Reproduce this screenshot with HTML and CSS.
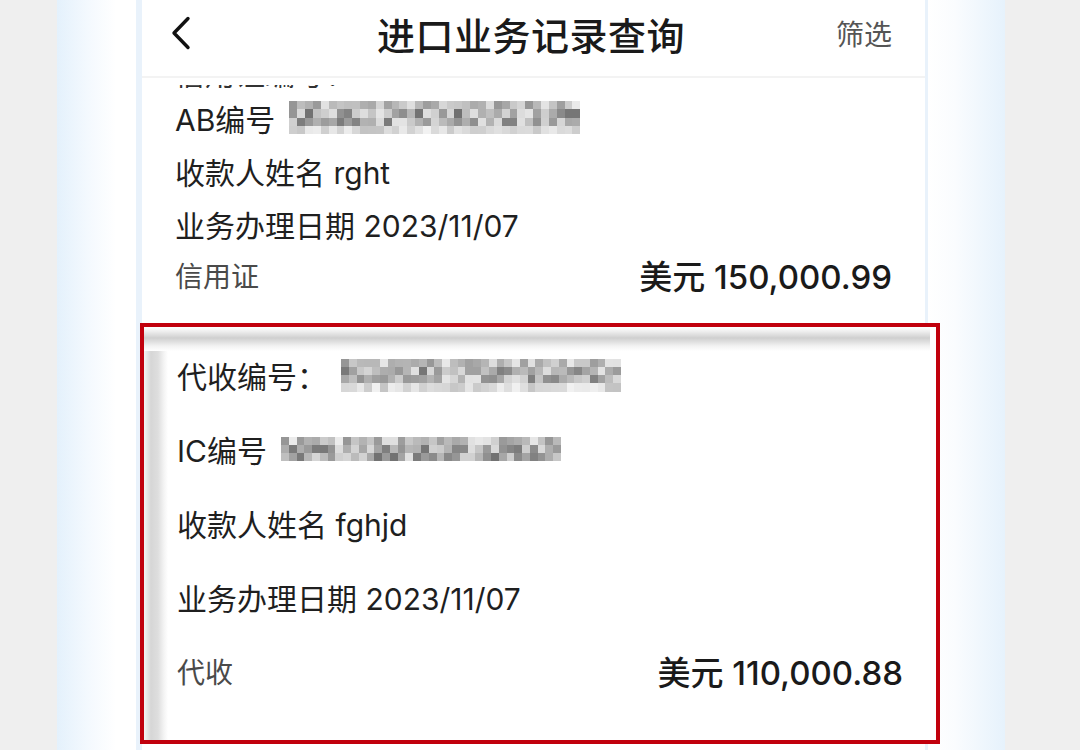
FILE: index.html
```html
<!DOCTYPE html>
<html lang="zh-CN">
<head>
<meta charset="utf-8">
<title>进口业务记录查询</title>
<link rel="stylesheet" href="styles.css">
</head>
<body>
<div class="page">
  <div class="gray gray-l"></div>
  <div class="grad-l"></div>
  <div class="strip strip-l"></div>
  <main class="phone">
    <header class="nav">
      <div class="nav-left">
        <svg class="back" width="22" height="34" viewBox="0 0 22 34"><polyline points="18,2.5 4,17 18,31.5" fill="none" stroke="#111" stroke-width="3.4" stroke-linecap="round" stroke-linejoin="round"/></svg>
      </div>
      <h1 class="title">进口业务记录查询</h1>
      <div class="nav-right"><span class="filter">筛选</span></div>
    </header>
    <section class="list">
      <div class="cut"><span class="cut-text">信用证编号：LC2023110700012</span></div>
      <article class="card1">
        <div class="row"><span>AB编号</span><span class="mosaic ab" data-cols="37" data-rows="4" data-seed="11"></span></div>
        <div class="row">收款人姓名 rght</div>
        <div class="row">业务办理日期 2023/11/07</div>
        <div class="row foot"><span class="type">信用证</span><span class="amount">美元 150,000.99</span></div>
      </article>
      <div class="highlight">
        <article class="card2">
          <div class="row"><span>代收编号：</span><span class="mosaic dc" data-cols="36" data-rows="4" data-seed="27"></span></div>
          <div class="row"><span>IC编号</span><span class="mosaic ic" data-cols="36" data-rows="3" data-seed="53"></span></div>
          <div class="row">收款人姓名 fghjd</div>
          <div class="row">业务办理日期 2023/11/07</div>
          <div class="row foot"><span class="type">代收</span><span class="amount">美元 110,000.88</span></div>
        </article>
      </div>
    </section>
  </main>
  <div class="strip strip-r"></div>
  <div class="grad-r"></div>
  <div class="gray gray-r"></div>
</div>
<script src="script.js"></script>
</body>
</html>
```

FILE: styles.css
```css
html, body {
  margin: 0;
  padding: 0;
}
body {
  width: 1080px;
  height: 750px;
  overflow: hidden;
  font-family: Inter, "Noto Sans CJK SC", sans-serif;
  color: #1f1f1f;
  background: #fff;
}
.page {
  display: flex;
  height: 750px;
}
.gray {
  background: #efefef;
  flex: none;
}
.gray-l { width: 57px; }
.gray-r { width: 75px; }
.grad-l {
  width: 79px;
  flex: none;
  background: linear-gradient(to right, #e4f1fc 0%, #f4f9fe 40%, #ffffff 75%, #ffffff 100%);
}
.grad-r {
  width: 77px;
  flex: none;
  background: linear-gradient(to right, #ffffff 0%, #fafcfe 35%, #e6f2fc 100%);
}
.strip {
  flex: none;
  background: #e9f2fb;
}
.strip-l { width: 6px; }
.strip-r { width: 3px; }

.phone {
  width: 783px;
  flex: none;
  background: #fff;
  display: flex;
  flex-direction: column;
}

/* nav */
.nav {
  box-sizing: border-box;
  height: 78px;
  border-bottom: 2px solid #f3f3f3;
  display: grid;
  grid-template-columns: 1fr auto 1fr;
  align-items: center;
  padding: 0 33px 10px 28px;
}
.nav-left {
  display: flex;
  align-items: center;
}
.back { display: block; }
.title {
  margin: 0;
  font-size: 38px;
  font-weight: 500;
  color: #1a1a1a;
  letter-spacing: 0.5px;
}
.nav-right {
  display: flex;
  justify-content: flex-end;
}
.filter {
  font-size: 28px;
  color: #555;
}

/* list */
.list {
  display: flex;
  flex-direction: column;
}
/* previous row scrolled under the nav: only its very bottom edge shows */
.cut {
  flex: none;
  margin-top: 7px;
  height: 3px;
  min-height: 0;
  overflow: hidden;
  padding-left: 33px;
  color: #333;
}
.cut-text {
  display: block;
  font-size: 30px;
  line-height: 30px;
  height: 30px;
  white-space: nowrap;
  margin-top: -26px;
}
.row {
  display: flex;
  align-items: center;
  font-size: 30px;
  white-space: nowrap;
}
.card1 {
  padding: 3px 33px 0 33px;
}
.card1 .row {
  height: 53px;
}
.card1 .row.foot {
  height: 49px;
}
.foot {
  justify-content: space-between;
}
.type {
  font-size: 28px;
  color: #4a4a4a;
}
.amount {
  font-size: 33px;
  font-weight: 500;
  color: #1a1a1a;
}

.highlight {
  position: relative;
  z-index: 1;
  margin: 24px -15px 0 -2px;
  border: 4px solid #c1000d;
}
.card2 {
  padding: 11px 33px 32px 33px;
  background:
    linear-gradient(to bottom, #ffffff 0px, #f0f0f0 4px, #cfcfcf 11px, #f2f2f2 19px, #ffffff 24px) top left / calc(100% - 6px) 24px no-repeat,
    linear-gradient(to right, #f4f4f4 0px, #d6d6d6 7px, #dedede 14px, #f4f4f4 20px, #ffffff 24px) top left / 24px 100% no-repeat,
    #ffffff;
}
.card2 .row {
  height: 74px;
}

/* mosaic (pixelated masked numbers) */
.mosaic {
  display: grid;
  flex: none;
}
.mosaic i { display: block; }
.mosaic.ab {
  width: 291px;
  height: 33px;
  margin-left: 14px;
}
.mosaic.dc {
  width: 280px;
  height: 33px;
  margin-left: 14px;
}
.mosaic.ic {
  width: 280px;
  height: 24px;
  margin-left: 14px;
}
```

FILE: script.js
```js
(function () {
  function rng(seed) {
    var s = seed % 2147483647;
    if (s <= 0) s += 2147483646;
    return function () {
      s = (s * 16807) % 2147483647;
      return (s - 1) / 2147483646;
    };
  }
  var els = document.querySelectorAll('.mosaic');
  els.forEach(function (el) {
    var cols = +el.dataset.cols;
    var rows = +el.dataset.rows;
    var r = rng(+el.dataset.seed);
    el.style.gridTemplateColumns = 'repeat(' + cols + ', 1fr)';
    el.style.gridTemplateRows = 'repeat(' + rows + ', 1fr)';
    for (var y = 0; y < rows; y++) {
      var lo, hi;
      if (y === rows - 1 && rows > 3) { lo = 195; hi = 242; }
      else if (y === 0) { lo = 150; hi = 238; }
      else { lo = 112; hi = 228; }
      for (var x = 0; x < cols; x++) {
        var v = Math.round(lo + (hi - lo) * r());
        var c = document.createElement('i');
        c.style.background = 'rgb(' + v + ',' + v + ',' + v + ')';
        el.appendChild(c);
      }
    }
  });
})();
```
